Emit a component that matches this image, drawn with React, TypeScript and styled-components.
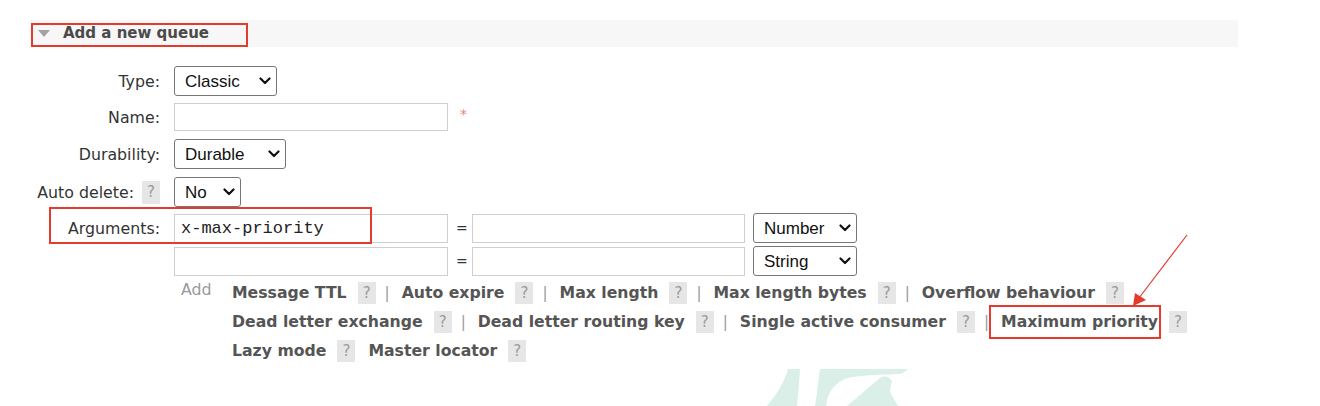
import React from "react";
import styled, { createGlobalStyle } from "styled-components";

const GlobalStyle = createGlobalStyle`
  html, body {
    margin: 0;
    padding: 0;
    background: #fff;
  }
  body {
    font-family: "DejaVu Sans", Verdana, sans-serif;
    color: #333;
  }
`;

const Page = styled.div`
  position: relative;
  width: 1320px;
  height: 406px;
  overflow: hidden;
  box-sizing: border-box;
  padding: 20px 0 0 30px;
`;

const SectionHeader = styled.div`
  width: 1208px;
  height: 27px;
  background: #f7f7f7;
  display: flex;
  align-items: flex-end;
`;

const HeaderMark = styled.div`
  display: flex;
  align-items: center;
  box-sizing: border-box;
  width: 217px;
  height: 24px;
  margin-left: 1px;
  padding: 0 0 4px 5px;
  border: 2px solid #e53b2f;
`;

const Triangle = styled.span`
  width: 0;
  height: 0;
  border-left: 6px solid transparent;
  border-right: 6px solid transparent;
  border-top: 7px solid #a3a3a3;
  margin-right: 13px;
`;

const HeaderTitle = styled.span`
  font-size: 15px;
  font-weight: bold;
  color: #4a4a4a;
  line-height: 18px;
`;

const Form = styled.div`
  display: flex;
  flex-direction: column;
`;

const Row = styled.div<{ $gap: number }>`
  position: relative;
  display: grid;
  grid-template-columns: 130px auto;
  column-gap: 14px;
  align-items: center;
  margin-top: ${(p) => p.$gap}px;
`;

const Label = styled.label`
  display: flex;
  justify-content: flex-end;
  align-items: center;
  gap: 8px;
  font-size: 15.8px;
  color: #333;
  white-space: nowrap;
`;

const Controls = styled.div`
  display: flex;
  align-items: center;
  gap: 8px;
`;

const Help = styled.span<{ $tall?: boolean }>`
  display: inline-flex;
  align-items: center;
  justify-content: center;
  width: 18px;
  height: ${(p) => (p.$tall ? 23 : 22)}px;
  background: #e6e6e6;
  color: #9a9a9a;
  font-size: 15px;
  font-weight: normal;
`;

const SelectBox = styled.span<{ $w: number }>`
  position: relative;
  display: inline-block;
  width: ${(p) => p.$w}px;
  height: 30px;
`;

const NativeSelect = styled.select`
  appearance: none;
  -webkit-appearance: none;
  width: 100%;
  height: 100%;
  box-sizing: border-box;
  border: 1px solid #767676;
  border-radius: 3px;
  background: #fff;
  padding: 0 0 0 10px;
  font-family: "Liberation Sans", Arial, sans-serif;
  font-size: 17px;
  color: #111;
  outline: none;
`;

const Chevron = styled.svg`
  position: absolute;
  right: 6px;
  top: 50%;
  transform: translateY(-50%);
  pointer-events: none;
`;

const TextInput = styled.input<{ $w: number; $h?: number }>`
  width: ${(p) => p.$w}px;
  height: ${(p) => p.$h ?? 28}px;
  box-sizing: border-box;
  border: 1px solid #cfcfcf;
  background: #fff;
  padding: 0 6px;
  outline: none;
  font-family: "Liberation Mono", "Courier New", monospace;
  font-size: 17px;
  color: #222;
`;

const Required = styled.span`
  margin-left: 4px;
  color: #f08080;
  font-size: 14px;
  align-self: flex-start;
  margin-top: 3px;
`;

const Equals = styled.span`
  width: 8px;
  text-align: center;
  font-size: 14px;
  color: #333;
`;

const Annotation = styled.span`
  position: absolute;
  border: 2px solid #e53b2f;
  pointer-events: none;
`;

const ArgsMark = styled(Annotation)`
  left: 19px;
  top: -6px;
  width: 323px;
  height: 37px;
  box-sizing: border-box;
`;

const HelpArea = styled.div`
  display: grid;
  grid-template-columns: 58px auto;
  align-items: start;
`;

const AddText = styled.span`
  padding-left: 7px;
  font-size: 15.8px;
  color: #999;
  line-height: 24px;
`;

const Lines = styled.div`
  display: flex;
  flex-direction: column;
`;

const Line = styled.div`
  display: flex;
  align-items: center;
  height: 29px;
`;

const LinkItem = styled.span`
  display: inline-flex;
  align-items: center;
  gap: 11px;
`;

const LinkText = styled.span`
  position: relative;
  font-size: 15.7px;
  font-weight: bold;
  color: #555;
  white-space: nowrap;
`;

const PriorityMark = styled(Annotation)`
  left: -12px;
  right: -3px;
  top: -7px;
  bottom: -8px;
`;

const Sep = styled.span`
  margin: 0 12px 0 9px;
  color: #999;
  font-size: 15px;
`;

const Spacer = styled.span`
  width: 13px;
`;

const Overlay = styled.svg`
  position: absolute;
  left: 0;
  top: 0;
  pointer-events: none;
`;

const ChevronIcon = () => (
  <Chevron width="12" height="8" viewBox="0 0 12 8">
    <path d="M1.5 1.5 L6 6 L10.5 1.5" fill="none" stroke="#111" strokeWidth="2.2" strokeLinecap="round" strokeLinejoin="round" />
  </Chevron>
);

const Select = ({ w, options }: { w: number; options: string[] }) => (
  <SelectBox $w={w}>
    <NativeSelect defaultValue={options[0]}>
      {options.map((o) => (
        <option key={o}>{o}</option>
      ))}
    </NativeSelect>
    <ChevronIcon />
  </SelectBox>
);

type Item = { text: string; marked?: boolean };

const lines: { items: Item[]; bars: boolean }[] = [
  {
    bars: true,
    items: [
      { text: "Message TTL" },
      { text: "Auto expire" },
      { text: "Max length" },
      { text: "Max length bytes" },
      { text: "Overflow behaviour" },
    ],
  },
  {
    bars: true,
    items: [
      { text: "Dead letter exchange" },
      { text: "Dead letter routing key" },
      { text: "Single active consumer" },
      { text: "Maximum priority", marked: true },
    ],
  },
  {
    bars: false,
    items: [{ text: "Lazy mode" }, { text: "Master locator" }],
  },
];

export default function App() {
  return (
    <>
      <GlobalStyle />
      <Page>
        <SectionHeader>
          <HeaderMark>
            <Triangle />
            <HeaderTitle>Add a new queue</HeaderTitle>
          </HeaderMark>
        </SectionHeader>

        <Form>
          <Row $gap={19}>
            <Label>Type:</Label>
            <Controls>
              <Select w={103} options={["Classic", "Quorum", "Stream"]} />
            </Controls>
          </Row>
          <Row $gap={7}>
            <Label>Name:</Label>
            <Controls>
              <TextInput $w={274} />
              <Required>*</Required>
            </Controls>
          </Row>
          <Row $gap={8}>
            <Label>Durability:</Label>
            <Controls>
              <Select w={112} options={["Durable", "Transient"]} />
            </Controls>
          </Row>
          <Row $gap={8}>
            <Label>
              Auto delete: <Help $tall>?</Help>
            </Label>
            <Controls>
              <Select w={67} options={["No", "Yes"]} />
            </Controls>
          </Row>
          <Row $gap={6}>
            <Label>Arguments:</Label>
            <Controls>
              <TextInput $w={274} $h={29} defaultValue="x-max-priority" />
              <Equals>=</Equals>
              <TextInput $w={273} $h={29} />
              <Select w={104} options={["Number", "String", "Boolean", "List"]} />
            </Controls>
            <ArgsMark />
          </Row>
          <Row $gap={3}>
            <Label />
            <Controls>
              <TextInput $w={274} $h={29} />
              <Equals>=</Equals>
              <TextInput $w={273} $h={29} />
              <Select w={104} options={["String", "Number", "Boolean", "List"]} />
            </Controls>
          </Row>
          <Row $gap={2}>
            <Label />
            <HelpArea>
              <AddText>Add</AddText>
              <Lines>
                {lines.map((line, li) => (
                  <Line key={li}>
                    {line.items.map((item, i) => (
                      <React.Fragment key={item.text}>
                        {i > 0 && (line.bars ? <Sep>|</Sep> : <Spacer />)}
                        <LinkItem>
                          <LinkText>
                            {item.text}
                            {item.marked && <PriorityMark />}
                          </LinkText>
                          <Help>?</Help>
                        </LinkItem>
                      </React.Fragment>
                    ))}
                  </Line>
                ))}
              </Lines>
            </HelpArea>
          </Row>
        </Form>

        <Overlay width="1320" height="406" viewBox="0 0 1320 406">
          <g fill="#d9efe8">
            <path d="M788 369 L800 369 C799 385 798 395 797 406 L767 406 C776 395 784 383 788 369 Z" />
            <path d="M820 369 L908 369 C905 372 902 374 898 374 C870 375 850 376 843 380 C832 386 828 393 826 406 L815 406 C817 395 818 382 820 369 Z" />
            <path d="M880 378 C884 375 890 377 892 381 C891 386 889 390 891 394 L898 406 L847 406 Z" />
          </g>
          <g>
            <line x1="1187" y1="235" x2="1139" y2="298" stroke="#e53b2f" strokeWidth="1.2" />
            <polygon points="1133,306 1135,293 1146,300" fill="#e53b2f" />
          </g>
        </Overlay>
      </Page>
    </>
  );
}
